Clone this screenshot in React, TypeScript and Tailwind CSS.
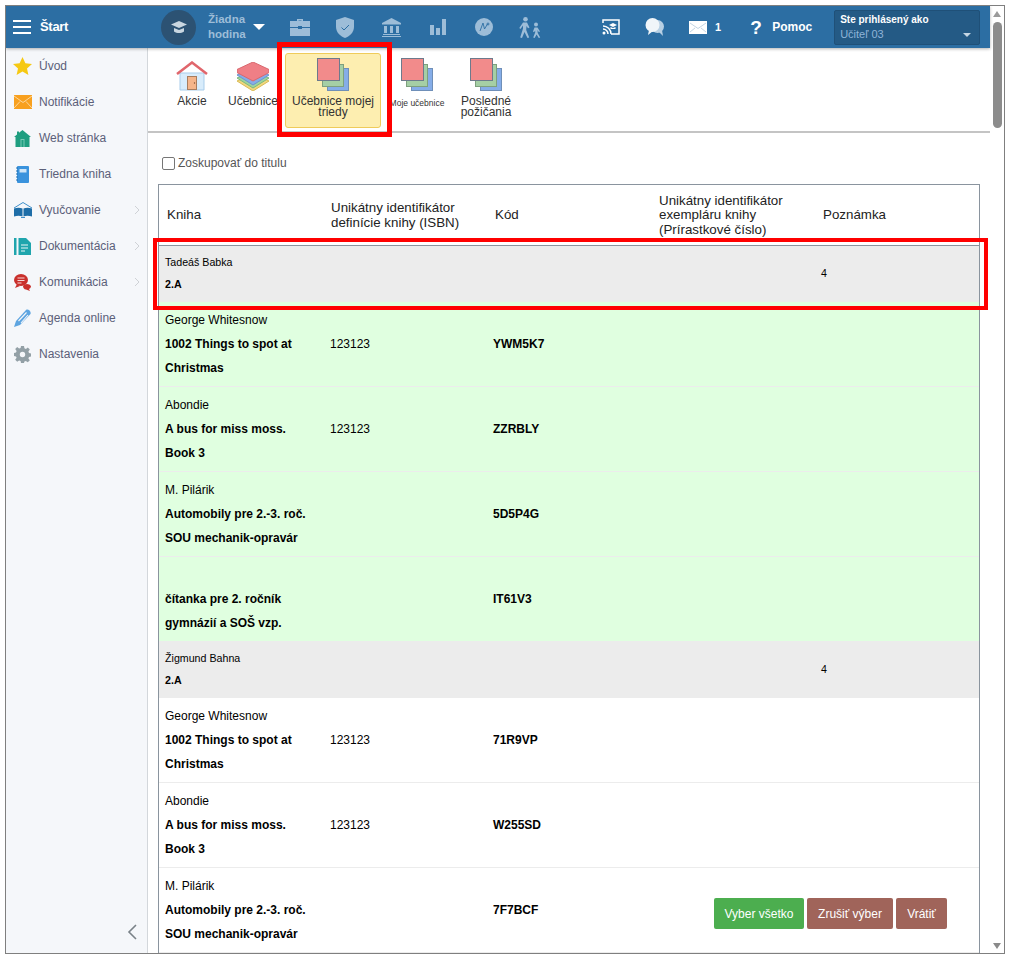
import type { ReactNode } from "react";

const font = "font-['Liberation_Sans',Arial,sans-serif]";

interface Book {
  author: string;
  title: string[];
  isbn?: string;
  code: string;
}

const green: Book[] = [
  { author: "George Whitesnow", title: ["1002 Things to spot at", "Christmas"], isbn: "123123", code: "YWM5K7" },
  { author: "Abondie", title: ["A bus for miss moss.", "Book 3"], isbn: "123123", code: "ZZRBLY" },
  { author: "M. Pilárik", title: ["Automobily pre 2.-3. roč.", "SOU mechanik-opravár"], code: "5D5P4G" },
  { author: "", title: ["čítanka pre 2. ročník", "gymnázií a SOŠ vzp."], code: "IT61V3" },
];

const white: Book[] = [
  { author: "George Whitesnow", title: ["1002 Things to spot at", "Christmas"], isbn: "123123", code: "71R9VP" },
  { author: "Abondie", title: ["A bus for miss moss.", "Book 3"], isbn: "123123", code: "W255SD" },
  { author: "M. Pilárik", title: ["Automobily pre 2.-3. roč.", "SOU mechanik-opravár"], code: "7F7BCF" },
];

function Icon({ w, h, box, children, className }: { w: number; h: number; box: string; children: ReactNode; className?: string }) {
  return (
    <svg width={w} height={h} viewBox={box} className={className}>
      {children}
    </svg>
  );
}

function Stack() {
  return (
    <Icon w={32} h={33} box="0 0 32 33">
      <rect x="10.5" y="10.5" width="21" height="22" fill="#85ade8" stroke="#6f8fb8" />
      <rect x="5.5" y="6.5" width="21" height="22" fill="#a5cfa5" stroke="#7ea07e" />
      <rect x="0.5" y="0.5" width="22" height="22" fill="#f28b8b" stroke="#6d7a8c" />
    </Icon>
  );
}

function HeaderIcons() {
  return (
    <>
      <Icon w={20} h={18} box="0 0 20 18" className="ml-[25px]">
        <path d="M7 3V1h6v2h-1.500V2.500h-3V3z" fill="#9dbdd8" />
        <path d="M0 3h20v6H12v-1H8v1H0zM0 10h8v1h4v-1h8v8H0z" fill="#9dbdd8" />
      </Icon>
      <Icon w={18} h={21} box="0 0 18 21" className="ml-[26px]">
        <path d="M9 0l9 3v7c0 5-4 9-9 11-5-2-9-6-9-11V3z" fill="#9dbdd8" />
        <path d="M5.500 10.500l2.500 2.500 5-5" fill="none" stroke="#2c6ea3" strokeWidth="1" />
      </Icon>
      <Icon w={19} h={19} box="0 0 19 19" className="ml-[28px]">
        <path d="M9.500 0L19 5v1.500H0V5z" fill="#9dbdd8" />
        <path d="M2 8h3v7H2zM8 8h3v7H8zM14 8h3v7h-3zM1 16h17v1H1zM0 18h19v1H0z" fill="#9dbdd8" />
      </Icon>
      <Icon w={16} h={16} box="0 0 16 16" className="ml-[29px]">
        <path d="M0 6h4v10H0zM6 9h4v7H6zM12 0h4v16h-4z" fill="#9dbdd8" />
      </Icon>
      <Icon w={18} h={18} box="0 0 18 18" className="ml-[29px]">
        <circle cx="9" cy="9" r="9" fill="#9dbdd8" />
        <path d="M5 13l3-8 1.500 6 3-5M11.500 6h3M13 4.500v3" fill="none" stroke="#2c6ea3" strokeWidth="0.9" />
      </Icon>
      <Icon w={22} h={21} box="0 0 22 21" className="ml-[26px]">
        <circle cx="6.5" cy="2.3" r="2.3" fill="#9dbdd8" />
        <circle cx="17" cy="7.5" r="2" fill="#9dbdd8" />
        <path d="M4 5.500h4l2.500 5-1.500.8-1.500-2.300-.3 4 3 7.500-1.700.5-3-6-2.500 6-1.800-.5 2.800-9V8.500L1.500 12 .3 11z" fill="#9dbdd8" />
        <path d="M15.500 10.500h3l2.500 4-1.200.6-1.300-2 .2 3 2.500 4.400-1.400.5-2.200-3.500-2 3.500-1.400-.5 2-5v-2l-1.200 1.800-1-.8z" fill="#9dbdd8" />
      </Icon>
    </>
  );
}

function TopBar() {
  return (
    <div className="h-[42px] shrink-0 bg-[#2c6ea3] flex items-center text-white relative z-10 shadow-[0_1px_3px_rgba(0,0,0,0.3)]">
      <div className="ml-[7px] w-[18px] flex flex-col gap-[4px]">
        <div className="h-[2px] bg-white" />
        <div className="h-[2px] bg-white" />
        <div className="h-[2px] bg-white" />
      </div>
      <span className="ml-[9px] w-[40px] text-[13px] font-bold tracking-[-0.3px]">Štart</span>
      <div className="ml-[81px] w-[35px] h-[35px] rounded-full bg-[#2c5273] flex items-center justify-center">
        <Icon w={16} h={14} box="0 0 16 14">
          <path d="M8 1l8 3.500-8 3.500L0 4.500z" fill="#c9d6e0" />
          <path d="M3 8l5 2 5-2v3.500c-3 2-7 2-10 0z" fill="#c9d6e0" />
        </Icon>
      </div>
      <div className="ml-[12px] w-[45px] text-[11.5px] font-bold leading-[15px] text-[#9dbdd8]">
        Žiadna
        <br />
        hodina
      </div>
      <div className="w-0 h-0 border-x-[6px] border-x-transparent border-t-[6px] border-t-white" />
      <HeaderIcons />
      <Icon w={18} h={16} box="0 0 18 16" className="ml-[61px]">
        <path d="M1 4V1h16v14H9" fill="none" stroke="#fff" strokeWidth="1.500" />
        <path d="M1 7a8 8 0 0 1 8 8M1 10a5 5 0 0 1 5 5" fill="none" stroke="#fff" strokeWidth="1.500" />
        <circle cx="2" cy="14" r="1.500" fill="#fff" />
        <path d="M11 4l4 2-4 2-4-2zM8.500 8l2.500 1 2.500-1v2h-5z" fill="#fff" />
      </Icon>
      <Icon w={19} h={19} box="0 0 19 19" className="ml-[25px]">
        <ellipse cx="12.5" cy="8.5" rx="6.5" ry="6.5" fill="#b8d0e4" />
        <path d="M13 13l5 5-1-6z" fill="#b8d0e4" />
        <ellipse cx="7.5" cy="7" rx="7" ry="7" fill="#f0f5f9" />
        <path d="M4 12l-1 5 5-4z" fill="#f0f5f9" />
      </Icon>
      <Icon w={18} h={13} box="0 0 18 13" className="ml-[25px]">
        <rect width="18" height="13" fill="#fff" />
        <path d="M1 2l8 5.500L17 2M1 11l5-4M17 11l-5-4" fill="none" stroke="#a9c2d6" strokeWidth="0.7" />
      </Icon>
      <span className="ml-[8px] text-[11px] font-bold">1</span>
      <span className="ml-[29px] text-[19px] font-bold leading-none w-[22px]">?</span>
      <span className="text-[12px] font-bold">Pomoc</span>
      <div className="ml-[22px] w-[146px] h-[35px] bg-[#245a85] border border-[#1f5078] rounded-[2px] pl-[5px] pt-[2px] relative">
        <div className="text-[10px] font-bold leading-[13px]">Ste prihlásený ako</div>
        <div className="text-[11px] leading-[17px] text-[#8fb4d8]">Učiteľ 03</div>
        <div className="absolute right-[8px] bottom-[7px] w-0 h-0 border-x-[4px] border-x-transparent border-t-[4px] border-t-[#c5d6e4]" />
      </div>
    </div>
  );
}

const navItems: { label: string; arrow?: boolean; icon: ReactNode }[] = [
  {
    label: "Úvod",
    icon: (
      <Icon w={19} h={18} box="0 0 19 18">
        <path d="M9.500 0l2.900 6.200 6.600.7-5 4.500 1.400 6.600-5.900-3.400L3.600 18 5 11.400 0 6.900l6.600-.7z" fill="#f6c913" />
      </Icon>
    ),
  },
  {
    label: "Notifikácie",
    icon: (
      <Icon w={18} h={14} box="0 0 18 14">
        <rect width="18" height="14" fill="#f8a01e" />
        <path d="M0 1l9 6.500L18 1M0 13l6-6.500M18 13l-6-6.500" fill="none" stroke="#fde5bd" strokeWidth="0.8" />
      </Icon>
    ),
  },
  {
    label: "Web stránka",
    icon: (
      <Icon w={17} h={17} box="0 0 17 17">
        <path d="M8.500 0L17 7h-1.500v10h-14V7H0l3-2.500V1.500h2v1.300z" fill="#1f9e80" />
        <path d="M6.500 9h4v8h-4z" fill="#79c9b5" />
        <path d="M7.500 10h2v7h-2z" fill="#1f9e80" />
      </Icon>
    ),
  },
  {
    label: "Triedna kniha",
    icon: (
      <Icon w={13} h={17} box="0 0 13 17">
        <rect x="1" width="12" height="17" rx="1" fill="#3a93dd" />
        <rect x="3.5" y="3" width="7" height="3.5" fill="#cfe6f8" />
        <path d="M0 2h2M0 5h2M0 8h2M0 11h2M0 14h2" stroke="#1f6fb0" strokeWidth="1" />
      </Icon>
    ),
  },
  {
    label: "Vyučovanie",
    arrow: true,
    icon: (
      <Icon w={18} h={16} box="0 0 18 16">
        <path d="M0 6L9 .5 18 6" fill="none" stroke="#3f8fc9" strokeWidth="1" />
        <path d="M0 6.500c3-1 6-1 8.500 0v8C6 13.500 3 13.500 0 14.500zM9.500 6.500c2.500-1 5.500-1 8.500 0v8c-3-1-6-1-8.500 0z" fill="#1e6ea8" />
        <path d="M7 15.500h4" stroke="#3f8fc9" strokeWidth="1" />
      </Icon>
    ),
  },
  {
    label: "Dokumentácia",
    arrow: true,
    icon: (
      <Icon w={17} h={17} box="0 0 17 17">
        <rect width="2.5" height="17" fill="#1fa5ad" />
        <path d="M4.500 0H12l5 5v12H4.500z" fill="#1fa5ad" />
        <path d="M7 7h7M7 10h7M7 13h4" stroke="#e9f7f8" strokeWidth="1.2" />
      </Icon>
    ),
  },
  {
    label: "Komunikácia",
    arrow: true,
    icon: (
      <Icon w={17} h={17} box="0 0 17 17">
        <ellipse cx="7" cy="6" rx="7" ry="6" fill="#c9302c" />
        <path d="M3 10L1 14l5-2z" fill="#c9302c" />
        <path d="M9 12a4.500 3.500 0 0 1 8 0c0 1.500-1 2.500-2 3l1 2-4-1.500c-2 0-3-2-3-3.500z" fill="#c9302c" />
        <path d="M3.500 4h7M3.500 6.500h7M3.500 9h4" stroke="#f7d6d5" strokeWidth="1" />
      </Icon>
    ),
  },
  {
    label: "Agenda online",
    icon: (
      <Icon w={18} h={18} box="0 0 18 18">
        <path d="M0 18l2-6L12 1c2-1.500 5.500 1.500 4.500 4L6 16z" fill="#5ea5e0" />
        <path d="M4.500 12L12.500 3.500M7 14l7-8" stroke="#f5f7fa" strokeWidth="1.1" />
      </Icon>
    ),
  },
  {
    label: "Nastavenia",
    icon: (
      <Icon w={17} h={17} box="0 0 17 17">
        <path
          d="M7 0h3l.4 2.300 1.500.6L13.800 1.500l2 2-1.400 2 .6 1.500 2 .5v3l-2 .4-.6 1.500 1.400 1.900-2 2-2-1.400-1.400.6L10 17H7l-.4-2-1.500-.6-1.900 1.400-2-2 1.400-2-.6-1.400L0 10V7l2-.4.600-1.500-1.400-2 2-2 1.900 1.400 1.500-.6z"
          fill="#93a0a6"
        />
        <circle cx="8.5" cy="8.5" r="2.7" fill="#f5f7fa" />
      </Icon>
    ),
  },
];

function Sidebar() {
  return (
    <div className="w-[142px] shrink-0 bg-[#f5f7fa] border-r border-[#d3d7db] relative">
      {navItems.map((item) => (
        <div key={item.label} className="h-[36px] flex items-center relative">
          <div className="w-[33px] flex justify-center shrink-0">{item.icon}</div>
          <span className="text-[12px] text-[#5b6079]">{item.label}</span>
          {item.arrow && (
            <svg width="6" height="10" viewBox="0 0 6 10" className="absolute left-[128px] top-[13px]">
              <path d="M1 1l4 4-4 4" fill="none" stroke="#cfd2d6" strokeWidth="1" />
            </svg>
          )}
        </div>
      ))}
      <svg width="10" height="16" viewBox="0 0 10 16" className="absolute left-[121px] bottom-[13px]">
        <path d="M9 1L2 8l7 7" fill="none" stroke="#7a8288" strokeWidth="1.600" />
      </svg>
    </div>
  );
}

function ToolButton({ label, active, small, center }: { label: ReactNode; active?: boolean; small?: boolean; center?: ReactNode }) {
  return (
    <div
      className={
        active
          ? "w-[96px] h-[75px] bg-[#fdeeb0] border border-[#efcb5a] rounded-[3px] flex flex-col items-center pt-[4px] text-[12px] leading-[11px] text-center text-[#333]"
          : "flex flex-col items-center pt-[5px] text-center text-[#333] leading-[11px] whitespace-nowrap " + (small ? "text-[8.5px]" : "text-[12px]")
      }
    >
      <div className="h-[33px] flex items-end">{center ?? <Stack />}</div>
      <div className={small ? "mt-[7px]" : "mt-[5px]"}>{label}</div>
    </div>
  );
}

function Toolbar() {
  return (
    <div className="h-[85px] shrink-0 bg-white border-b-2 border-[#c4c4c4] flex items-start pt-[5px]">
      <div className="w-[30px] ml-[29px]">
        <ToolButton
          label="Akcie"
          center={
            <Icon w={32} h={30} box="0 0 32 30">
              <path d="M4 12h24v17H4z" fill="#d8ecfb" stroke="#a9cdea" />
              <path d="M1 13L16 1.500 31 13" fill="none" stroke="#e0666c" strokeWidth="2.500" />
              <rect x="11.5" y="15.5" width="9" height="13" fill="#f5b58a" stroke="#a87d5e" />
              <circle cx="18.5" cy="22" r="0.7" fill="#7a4a2e" />
            </Icon>
          }
        />
      </div>
      <div className="w-[50px] ml-[21px]">
        <ToolButton
          label="Učebnice"
          center={
            <Icon w={32} h={29} box="0 0 32 29">
              <path d="M16 12L32 19 16 29 0 19z" fill="#f1d77f" stroke="#d9bb55" />
              <path d="M16 9l16 7-16 10L0 16z" fill="#9fd49f" stroke="#7cb97c" />
              <path d="M16 6l16 7-16 10L0 13z" fill="#85ade8" stroke="#6e94cf" />
              <path d="M0 7.500L16 0l16 7.500v3L16 19 0 10.500z" fill="#ef7f86" stroke="#d9676e" />
            </Icon>
          }
        />
      </div>
      <div className="ml-[7px]">
        <ToolButton active label={<>Učebnice mojej<br />triedy</>} />
      </div>
      <div className="w-[60px] ml-[6px]">
        <ToolButton small label="Moje učebnice" />
      </div>
      <div className="w-[60px] ml-[9px]">
        <ToolButton label={<>Posledné<br />požičania</>} />
      </div>
    </div>
  );
}

function BookRow({ book, bg }: { book: Book; bg: string }) {
  return (
    <div className={"h-[85px] grid grid-cols-[165px_163px_164px_164px_1fr] pl-[6px] pt-[6px] border-b border-[#ececec] text-[12px] leading-[24px] text-black " + bg}>
      <div className="whitespace-nowrap">
        <div className="h-[24px]">{book.author}</div>
        <div className="font-bold">{book.title[0]}</div>
        <div className="font-bold">{book.title[1]}</div>
      </div>
      <div className="pt-[24px]">{book.isbn}</div>
      <div className="pt-[24px] font-bold">{book.code}</div>
      <div />
      <div />
    </div>
  );
}

function GroupRow({ name }: { name: string }) {
  return (
    <div className="h-[56px] bg-[#ececec] grid grid-cols-[656px_1fr] pl-[6px] pt-[5px] text-[10.67px] leading-[22px] text-black">
      <div>
        <div>{name}</div>
        <div className="font-bold">2.A</div>
      </div>
      <div className="pt-[11px]">4</div>
    </div>
  );
}

function BookTable() {
  return (
    <div className="ml-[10px] w-[822px] border border-[#8a949e] border-b-0 overflow-hidden">
      <div className="h-[61px] grid grid-cols-[164px_164px_164px_164px_1fr] pl-[8px] items-center border-b border-[#8a949e] text-[13.33px] leading-[14.5px] text-[#222] pt-[1px]">
        <div>Kniha</div>
        <div>
          Unikátny identifikátor
          <br />
          definície knihy (ISBN)
        </div>
        <div>Kód</div>
        <div>
          Unikátny identifikátor
          <br />
          exempláru knihy
          <br />
          (Prírastkové číslo)
        </div>
        <div>Poznámka</div>
      </div>
      <GroupRow name="Tadeáš Babka" />
      {green.map((b) => (
        <BookRow key={b.code} book={b} bg="bg-[#e0ffe0]" />
      ))}
      <GroupRow name="Žigmund Bahna" />
      {white.map((b) => (
        <BookRow key={b.code} book={b} bg="bg-white" />
      ))}
    </div>
  );
}

function Scrollbar() {
  return (
    <div className="w-[14px] shrink-0 bg-white relative flex flex-col items-center pt-[5px]">
      <div className="w-0 h-0 border-x-[4px] border-x-transparent border-b-[6px] border-b-[#9a9a9a]" />
      <div className="mt-[5px] w-[9px] h-[106px] rounded-full bg-[#8c8c8c]" />
      <div className="absolute bottom-[4px] w-0 h-0 border-x-[4px] border-x-transparent border-t-[6px] border-t-[#8a8a8a]" />
    </div>
  );
}

export default function App() {
  return (
    <div className={"relative w-[1010px] h-[958px] bg-white overflow-hidden pt-[5px] pl-[5px] " + font}>
      <div className="w-[1000px] h-[949px] border border-[#7f7f7f] flex overflow-hidden">
        <div className="w-[984px] flex flex-col shrink-0">
          <TopBar />
          <div className="flex-1 flex min-h-0">
            <Sidebar />
            <div className="flex-1 min-w-0 bg-white overflow-hidden">
              <Toolbar />
              <div className="h-[51px] pl-[14px] pt-[9px] flex items-center gap-[3px] text-[12px] text-[#555]">
                <div className="w-[13px] h-[13px] border border-[#767676] rounded-[2px] bg-white" />
                Zoskupovať do titulu
              </div>
              <BookTable />
            </div>
          </div>
        </div>
        <Scrollbar />
      </div>

      {/* floating action buttons */}
      <div className="absolute z-20 left-[714px] top-[898px] flex gap-[3px] text-[12px] text-white h-[31px]">
        <div className="w-[90px] rounded-[2px] bg-[#4cae4f] flex items-center justify-center">Vyber všetko</div>
        <div className="w-[86px] rounded-[2px] bg-[#a0645a] flex items-center justify-center">Zrušiť výber</div>
        <div className="w-[51px] rounded-[2px] bg-[#a0645a] flex items-center justify-center">Vrátiť</div>
      </div>

      {/* red annotation frames */}
      <div className="absolute z-20 left-[277px] top-[42px] w-[115px] h-[95px] border-[5px] border-[#ff0000]" />
      <div className="absolute z-20 left-[153px] top-[238px] w-[835px] h-[72px] border-[4px] border-[#ff0000]" />
    </div>
  );
}
